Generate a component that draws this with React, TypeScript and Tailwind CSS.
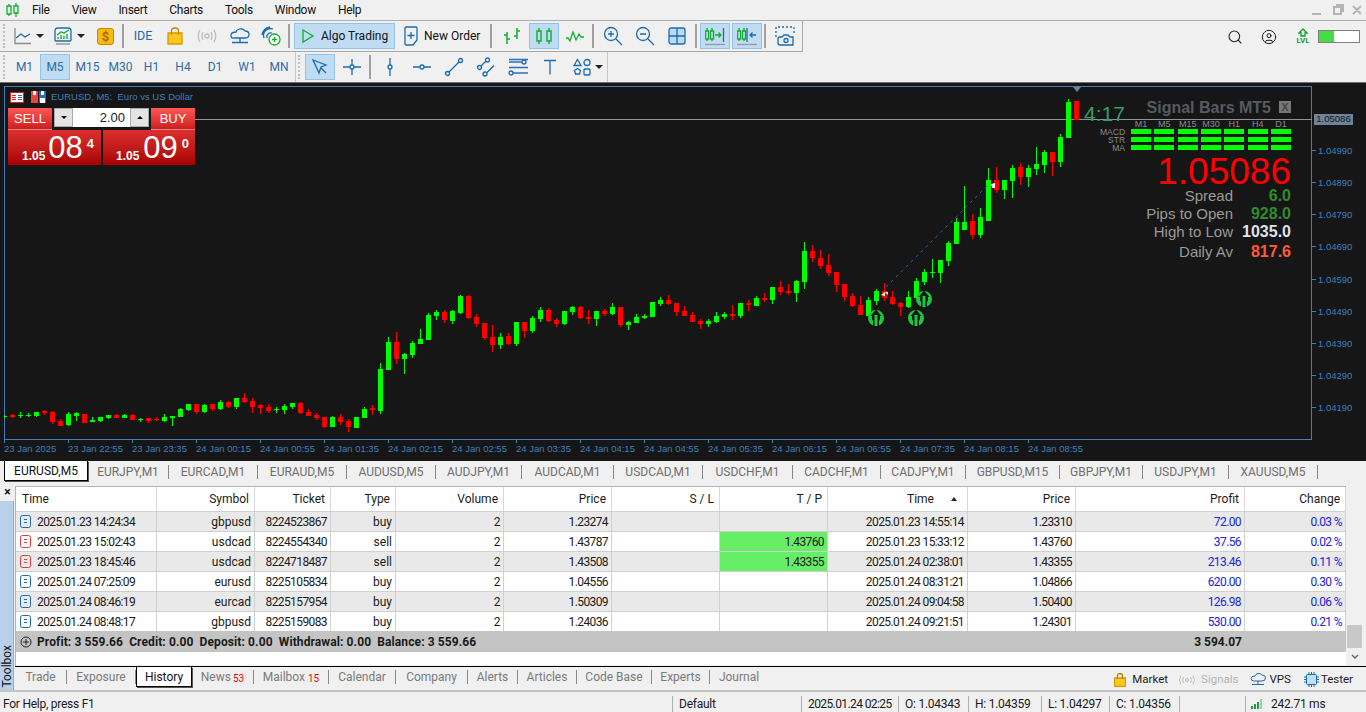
import type { ReactNode } from "react";
import { Search, CircleUser } from "lucide-react";

// wick top, body top, body bottom, wick bottom, up? (page pixels, bar k sits at x = 4 + 8k)
type Bar = [number, number, number, number, 0 | 1];
const bars: Bar[] = [
  [415,416,417,418,1],[414,415,417,418,0],[412,415,416,418,1],[413,415,416,417,1],[412,412,416,417,1],[410,411,413,415,0],[411,412,422,424,0],[419,421,426,426,0],
  [412,414,425,426,1],[412,413,416,421,1],[414,414,423,423,0],[417,420,422,422,1],[417,417,421,422,1],[415,415,418,419,1],[414,415,418,418,0],[414,415,418,418,1],
  [414,415,420,420,0],[418,419,420,422,1],[418,418,421,423,0],[417,419,420,421,0],[414,417,421,422,1],[416,416,418,426,1],[408,409,417,417,1],[404,404,410,411,1],
  [404,404,412,414,0],[404,405,412,413,1],[404,404,409,411,0],[400,402,409,410,1],[401,402,407,408,0],[398,398,407,409,1],[393,398,402,403,0],[398,401,407,413,0],
  [404,405,408,414,0],[404,407,411,413,0],[407,409,410,413,1],[404,406,410,414,1],[403,403,407,409,1],[402,403,413,414,0],[409,412,416,416,0],[413,415,418,420,0],
  [417,417,427,428,0],[416,417,427,427,1],[414,417,422,425,0],[419,421,427,432,0],[417,417,428,428,1],[407,409,418,418,1],[405,408,410,415,0],[363,369,411,414,1],
  [337,342,370,370,1],[332,342,359,364,0],[353,354,359,374,1],[341,343,355,358,1],[329,339,344,344,1],[313,315,340,340,1],[310,312,316,320,1],[310,312,320,323,0],
  [310,311,321,324,1],[295,296,313,314,1],[295,296,318,319,0],[314,317,324,327,0],[323,323,338,340,0],[325,337,345,352,0],[333,337,345,349,1],[333,336,344,345,0],
  [322,322,344,346,1],[322,322,331,338,0],[316,318,331,333,1],[307,310,319,322,1],[308,310,321,322,0],[318,320,324,327,0],[311,311,324,325,1],[306,307,312,315,1],
  [306,307,318,319,0],[310,317,319,324,0],[311,311,319,326,1],[309,311,314,316,0],[303,307,314,315,1],[307,307,325,327,0],[321,322,325,330,1],[314,317,323,323,1],
  [314,316,318,319,1],[302,302,317,317,1],[297,300,304,306,1],[295,300,304,305,0],[303,303,312,316,0],[306,311,316,316,0],[312,315,322,322,0],[319,321,324,329,0],
  [319,321,324,327,1],[312,316,322,323,1],[312,314,317,319,1],[305,314,316,320,0],[303,303,316,318,1],[300,303,305,311,0],[296,298,306,306,1],[293,298,300,302,0],
  [287,287,300,304,1],[281,287,292,295,0],[284,291,293,295,0],[280,281,293,302,1],[242,251,282,289,1],[245,251,258,262,0],[250,258,266,269,0],[254,265,273,276,0],
  [272,272,285,292,0],[284,284,297,301,0],[293,296,306,307,0],[296,305,315,315,0],[297,300,316,316,1],[289,291,301,305,1],[283,291,298,301,0],[291,297,304,305,0],
  [302,303,307,316,0],[291,297,307,308,1],[278,281,298,298,1],[269,272,282,285,1],[259,272,273,278,1],[260,260,273,283,1],[241,243,261,266,1],[218,222,244,244,1],
  [186,222,230,230,1],[214,221,235,239,0],[208,217,235,238,1],[168,180,221,221,1],[167,180,190,193,0],[180,180,190,199,1],[165,168,181,198,1],[163,167,177,185,0],
  [165,168,177,187,1],[147,164,169,175,1],[150,152,165,173,1],[152,152,162,176,0],[134,137,162,167,1],[99,102,138,138,1],[101,101,120,120,0],
];

const timeLabels = ["23 Jan 2025","23 Jan 22:55","23 Jan 23:35","24 Jan 00:15","24 Jan 00:55","24 Jan 01:35","24 Jan 02:15","24 Jan 02:55","24 Jan 03:35","24 Jan 04:15","24 Jan 04:55","24 Jan 05:35","24 Jan 06:15","24 Jan 06:55","24 Jan 07:35","24 Jan 08:15","24 Jan 08:55"];
const priceLabels = ["1.04990","1.04890","1.04790","1.04690","1.04590","1.04490","1.04390","1.04290","1.04190"];
const priceY = [150,182,214,246,279,311,343,375,407];

function ArrowMark({ x, y }: { x: number; y: number }) {
  return (
    <g transform={`translate(${x} ${y})`}>
      <circle r="6" fill="none" stroke="#1cc83c" strokeWidth="4" />
      <path d="M0 -8.500 L-5.500 -2 L-3 -2 L-3 8.500 L3 8.500 L3 -2 L5.500 -2 Z" fill="#161616" />
      <rect x="-1.500" y="-3" width="3" height="11" fill="#1cc83c" />
    </g>
  );
}

function ChartCanvas() {
  return (
    <svg className="absolute left-0 top-0 font-['Liberation_Sans',sans-serif]" width="1366" height="378" viewBox="0 83 1366 378">
      <g shapeRendering="crispEdges">
        {/* frame */}
        <rect x="4.5" y="86.5" width="1307" height="353" fill="none" stroke="#3f7fbd" />
        <rect x="195" y="119" width="1117" height="1" fill="#8b959e" />
        {bars.map((b, k) => {
          const x = 4 + 8 * k;
          const c = b[4] ? "#00ff00" : "#ff0000";
          return (
            <g key={k} fill={c}>
              <rect x={x} y={b[0]} width="1" height={b[3] - b[0]} />
              <rect x={k === 0 ? x : x - 2} y={b[1]} width={k === 0 ? 3 : 5} height={b[2] - b[1]} />
            </g>
          );
        })}
        {timeLabels.map((_, i) => (
          <rect key={i} x={4 + 64 * i} y="439" width="1" height="4" fill="#3f7fbd" />
        ))}
        {priceY.map((y) => (
          <rect key={y} x="1312" y={y} width="4" height="1" fill="#3f7fbd" />
        ))}
      </g>
      <path d="M886 287 L990 183" stroke="#1a66b0" strokeDasharray="3 4" fill="none" />
      <path d="M881 295 l4 -3 l0 4 z M888 295 l-3 -3 l3 0 z" fill="#fff" />
      <path d="M991 184 l4 -1 l0 5 l-3 0 z" fill="#fff" />
      <path d="M1073 87 h8 l-4 5 z" fill="#6f8299" />
      <ArrowMark x={876} y={318} />
      <ArrowMark x={916} y={318} />
      <ArrowMark x={924} y={299} />
      {timeLabels.map((t, i) => (
        <text key={t} x={4 + 64 * i} y="452" fontSize="9.5" fill="#3f7fbd">{t}</text>
      ))}
      {priceLabels.map((p, i) => (
        <text key={p} x="1318" y={priceY[i] + 4} fontSize="9.5" fill="#3f7fbd">{p}</text>
      ))}
    </svg>
  );
}

function TradePanel() {
  return (
    <div className="absolute left-[8px] top-[25px] w-[187px] font-['Liberation_Sans',sans-serif] text-white">
      <div className="flex h-[22px] items-start">
        <div className="flex h-[22px] w-[44px] items-center justify-center border-b border-[#e88] bg-linear-to-b from-[#ff5656] to-[#cc1c1c] text-[13px]">SELL</div>
        <div className="ml-[2px] flex h-[19px] w-[95px] items-stretch bg-white text-[13px] text-[#222]">
          <div className="flex w-[19px] items-center justify-center border border-[#aaa] bg-[#e4e4e4]">
            <span className="h-0 w-0 border-x-[3px] border-t-[3px] border-x-transparent border-t-black" />
          </div>
          <div className="flex flex-1 items-center justify-end pr-[5px]">2.00</div>
          <div className="flex w-[19px] items-center justify-center border border-[#aaa] bg-[#e4e4e4]">
            <span className="h-0 w-0 border-x-[3px] border-b-[3px] border-x-transparent border-b-black" />
          </div>
        </div>
        <div className="ml-[2px] flex h-[22px] w-[44px] items-center justify-center border-b border-[#e88] bg-linear-to-b from-[#ff5656] to-[#cc1c1c] text-[13px]">BUY</div>
      </div>
      <div className="flex h-[35px] gap-[2px]">
        <div className="flex w-[93px] items-start bg-linear-to-b from-[#dc2e2e] to-[#a80000] pl-[14px]">
          <span className="mt-[17px] text-[12px] font-bold">1.05</span>
          <span className="ml-[3px] mt-[2px] text-[31px] leading-[32px]">08</span>
          <span className="ml-[4px] mt-[4px] text-[13px] font-bold">4</span>
        </div>
        <div className="flex w-[92px] items-start bg-linear-to-b from-[#dc2e2e] to-[#a80000] pl-[13px]">
          <span className="mt-[17px] text-[12px] font-bold">1.05</span>
          <span className="ml-[4px] mt-[2px] text-[31px] leading-[32px]">09</span>
          <span className="ml-[4px] mt-[4px] text-[13px] font-bold">0</span>
        </div>
      </div>
    </div>
  );
}

const frames = ["M1", "M5", "M15", "M30", "H1", "H4", "D1"];

function SignalRow({ name }: { name: string }) {
  return (
    <div className="flex h-[5px] items-center">
      <span className="mr-[6px] w-[40px] text-right text-[8.500px] leading-[8px] text-[#8c8c8c]">{name}</span>
      <div className="flex gap-[3.33px]">
        {frames.map((f) => (
          <div key={f} className="h-[5px] w-[20px] bg-[#00ff00]" />
        ))}
      </div>
    </div>
  );
}

function StatRow({ label, value, color, className }: { label: string; value: string; color: string; className: string }) {
  return (
    <div className={`flex h-[18px] items-center justify-end ${className}`}>
      <span className="text-[15px] text-[#9a9a9a]">{label}</span>
      <span className={`w-[58px] text-right text-[16px] font-bold ${color}`}>{value}</span>
    </div>
  );
}

function SignalPanel() {
  return (
    <div className="absolute right-[75px] top-[15px] flex w-[240px] flex-col items-end font-['Liberation_Sans',sans-serif]">
      <div className="flex h-[18px] items-center">
        <span className="mt-[1px] text-[16px] font-bold text-[#555b60]">Signal Bars MT5</span>
        <span className="ml-[8px] flex h-[12px] w-[12px] items-center justify-center bg-[#777] text-[11px] font-bold leading-none text-[#444]">X</span>
      </div>
      <div className="mt-[4px] flex h-[9px] gap-[3.33px] text-[9px] leading-[9px] text-[#8c8c8c]">
        {frames.map((f) => (
          <span key={f} className="w-[20px] text-center">{f}</span>
        ))}
      </div>
      <div className="flex flex-col gap-[3px]">
        <SignalRow name="MACD" />
        <SignalRow name="STR" />
        <SignalRow name="MA" />
      </div>
      <div className="mt-[3px] h-[34px] text-[37px] leading-[38px] text-[#ff0000]">1.05086</div>
      <StatRow label="Spread" value="6.0" color="text-[#2e8b2e]" className="" />
      <StatRow label="Pips to Open" value="928.0" color="text-[#2e8b2e]" className="" />
      <StatRow label="High to Low" value="1035.0" color="text-[#dfe4ea]" className="" />
      <StatRow label="Daily Av" value="817.6" color="text-[#ff5a3c]" className="mt-[2px]" />
    </div>
  );
}

function ChartHeader() {
  return (
    <div className="absolute left-[10px] top-[8px] flex h-[12px] items-center font-['Liberation_Sans',sans-serif] text-[9.500px] text-[#3f7fbd]">
      <svg width="14" height="11" viewBox="0 0 14 11" shapeRendering="crispEdges">
        <rect width="14" height="11" fill="#e02020" />
        <rect x="1" y="1" width="12" height="9" fill="#fff" />
        <path d="M2 3h4M2 5h4M2 7h4" stroke="#e02020" />
        <path d="M8 3h4M8 5h4M8 7h4" stroke="#2a6cb8" />
      </svg>
      <svg className="ml-[7px]" width="15" height="12" viewBox="0 0 15 12" shapeRendering="crispEdges">
        <rect width="7" height="12" fill="#f04040" />
        <rect x="8" width="7" height="12" fill="#2a6cb8" />
        <rect x="2" y="0" width="3" height="4" fill="#fff" />
        <rect x="10" y="0" width="3" height="4" fill="#fff" />
        <rect x="9" y="7" width="5" height="5" fill="#fff" />
      </svg>
      <span className="ml-[5px] mt-[1px] whitespace-pre">EURUSD, M5:  Euro vs US Dollar</span>
    </div>
  );
}

function Chart() {
  return (
    <div className="relative h-[378px] bg-[#161616]">
      <ChartCanvas />
      <ChartHeader />
      <TradePanel />
      <SignalPanel />
      <span className="absolute left-[1084px] top-[20px] font-['Liberation_Sans',sans-serif] text-[21px] leading-[22px] text-[#3a9b6b]">4:17</span>
      <span className="absolute left-[1314px] top-[31px] flex h-[11px] w-[39px] items-center justify-center bg-[#6f8398] font-['Liberation_Sans',sans-serif] text-[9.5px] text-[#10161c]">1.05086</span>
    </div>
  );
}

/* ---------- toolbar icons ---------- */
const blue = "#1b6bb0";
const green = "#0fae2c";

function Sep({ className = "mx-[3px]" }: { className?: string }) {
  return <div className={`h-[24px] w-[2px] shrink-0 self-center bg-[#a0a0a0] ${className}`} />;
}

function Grip() {
  return <div className="mx-[2px] h-[24px] w-[2px] self-center border-l-2 border-dotted border-[#c0c0c0]" />;
}

function Caret() {
  return <span className="block h-0 w-0 border-x-[4px] border-t-[4px] border-x-transparent border-t-[#222]" />;
}

function Tool({ w = "w-[32px]", on, children, className = "" }: { w?: string; on?: boolean; children: ReactNode; className?: string }) {
  return (
    <div className={`flex h-[26px] shrink-0 items-center justify-center border ${w} ${on ? "border-[#90c4ee] bg-[#c0dcf3]" : "border-transparent"} ${className}`}>
      {children}
    </div>
  );
}

function Svg({ w = 20, h = 20, children }: { w?: number; h?: number; children: ReactNode }) {
  return (
    <svg className="shrink-0" width={w} height={h} viewBox={`0 0 ${w} ${h}`} fill="none" strokeWidth="1.3">
      {children}
    </svg>
  );
}

function CandleGlyph({ x, c = green }: { x: number; c?: string }) {
  return <path d={`M${x + 2} 2v3M${x + 2} 15v3M${x} 5h4v10h-4z`} stroke={c} strokeWidth="1.4" />;
}

function ToolRowOne() {
  return (
    <div className="flex h-[31px] w-[803px] items-center whitespace-nowrap border-b border-r border-[#a8a8a8] pl-[1px]">
      <Grip />
      <div className="ml-[6px] flex w-[19px] justify-center">
        <Svg w={18} h={18}>
          <path d="M1 1v15.5h16" stroke="#8a8a8a" />
          <path d="M2 11l5-4 4 3 5-3" stroke={blue} />
        </Svg>
      </div>
      <div className="ml-[4px] mr-[9px]"><Caret /></div>
      <Svg w={20} h={20}>
        <path d="M2 5q0-3 3-3h10q3 0 3 3v9q0 1-1 1H3q-1 0-1-1z" stroke={blue} />
        <path d="M3 18h14" stroke="#8a8a8a" />
        <path d="M5 13v-2M8 13v-4M11 13v-3M14 13v-5" stroke={green} />
        <path d="M4 9l4-3 3 1 5-3" stroke={green} />
      </Svg>
      <div className="ml-[4px] mr-[12px]"><Caret /></div>
      <div className="flex h-[17px] w-[17px] items-center justify-center rounded-[3px] border border-[#c98a00] bg-[#f8b912] text-[13px] font-bold leading-none text-[#a86a00]">$</div>
      <Sep className="ml-[8px] mr-0" />
      <Tool w="w-[38px]"><span className="text-[12.500px] text-[#1b6bb0]">IDE</span></Tool>
      <Tool w="w-[26px]">
        <Svg w={16} h={18}>
          <path d="M1 6h14v11H1z" fill="#f8c820" stroke="#d89a00" />
          <path d="M4.5 8V3.5q0-2.5 3.5-2.5t3.5 2.5V8" stroke="#c88800" />
        </Svg>
      </Tool>
      <Tool w="w-[38px]">
        <Svg w={20} h={14}>
          <circle cx="10" cy="7" r="2" stroke="#bdbdbd" />
          <path d="M6 3q-2 4 0 8M14 3q2 4 0 8M3 1q-3.500 6 0 12M17 1q3.500 6 0 12" stroke="#bdbdbd" />
        </Svg>
      </Tool>
      <Tool w="w-[28px]">
        <Svg w={20} h={17}>
          <path d="M5 10h10q4 0 4-3.500t-4-3.500q-2-3-5.500-2T6 4q-5 0-5 3.500T5 10z" stroke={blue} />
          <path d="M10 10v4M2 14.500h16" stroke={blue} />
        </Svg>
      </Tool>
      <Tool w="w-[34px]">
        <Svg w={20} h={20}>
          <path d="M3 12a7 7 0 0 1 9-9M1 9a10 10 0 0 1 8-8M6 12a4 4 0 0 1 5-5" stroke={blue} />
          <circle cx="13.500" cy="13.500" r="5.500" fill="#fff" stroke={green} />
          <path d="M13.500 11v5M11 13.500h5" stroke={green} />
        </Svg>
      </Tool>
      <Sep className="ml-0 mr-[4px]" />
      <Tool w="w-[101px]" on className="justify-start pl-[6px]">
        <Svg w={14} h={16}><path d="M2 2l10 6-10 6z" stroke={green} /></Svg>
        <span className="ml-[6px] text-[12px] text-[#111]">Algo Trading</span>
      </Tool>
      <div className="ml-[8px] flex items-center">
        <Svg w={16} h={20}>
          <path d="M3 1h10q1 0 1 1v12l-4 5H3q-1 0-1-1V2q0-1 1-1z" stroke={blue} />
          <path d="M8 6v7M4.500 9.500h7" stroke={blue} />
        </Svg>
        <span className="ml-[5px] text-[12px] text-[#111]">New Order</span>
      </div>
      <Sep className="ml-[10px] mr-[3px]" />
      <Tool w="w-[34px]">
        <Svg w={20} h={18}>
          <path d="M5 5v12M5 8H2M5 12h3M15 1v11M15 4h3M15 9h-3" stroke={green} strokeWidth="1.5" />
        </Svg>
      </Tool>
      <Tool w="w-[30px]" on>
        <Svg w={20} h={20}><CandleGlyph x={3} /><CandleGlyph x={13} /></Svg>
      </Tool>
      <Tool w="w-[32px]">
        <Svg w={20} h={14}>
          <path d="M1 9h2l2 3 3-9 3 8 3-6 2 3h3" stroke={green} />
        </Svg>
      </Tool>
      <Sep className="ml-[1px] mr-[3px]" />
      <Tool>
        <Svg w={20} h={20}>
          <circle cx="8" cy="8" r="6.500" stroke={blue} />
          <path d="M13 13l6 6M8 5v6M5 8h6" stroke={blue} />
        </Svg>
      </Tool>
      <Tool>
        <Svg w={20} h={20}>
          <circle cx="8" cy="8" r="6.500" stroke={blue} />
          <path d="M13 13l6 6M5 8h6" stroke={blue} />
        </Svg>
      </Tool>
      <Tool>
        <Svg w={18} h={18}>
          <rect x="1" y="1" width="16" height="16" rx="2" fill="#bcdcf6" stroke={blue} />
          <path d="M9 1v16M1 9h16" stroke={blue} />
        </Svg>
      </Tool>
      <Sep className="ml-[2px] mr-[3px]" />
      <Tool w="w-[30px]" on>
        <Svg w={20} h={20}>
          <path d="M2 2v3M2 13v2M0.500 5h3v8h-3zM7 2v3M7 13v2M5.500 5h3v8h-3z" stroke={green} />
          <path d="M10 9h6M13.500 6.500L16 9l-2.500 2.500" stroke={green} />
          <path d="M18.500 2v14" stroke={blue} />
          <path d="M0 18.500h20" stroke="#9a9a9a" />
        </Svg>
      </Tool>
      <Tool w="w-[30px]" className="ml-[2px]" on>
        <Svg w={20} h={20}>
          <path d="M2 2v3M2 13v2M0.500 5h3v8h-3zM7 2v3M7 13v2M5.500 5h3v8h-3z" stroke={green} />
          <path d="M10 2v14" stroke={blue} />
          <path d="M13 9h6M15.500 6.500L13 9l2.500 2.500" stroke={blue} />
          <path d="M0 18.500h20" stroke="#9a9a9a" />
        </Svg>
      </Tool>
      <Sep className="ml-[2px] mr-[5px]" />
      <Tool w="w-[28px]">
        <Svg w={20} h={20}>
          <path d="M1 11V1h18v7" stroke={blue} strokeDasharray="2 2" />
          <path d="M5 19q-2 0-2-2v-4q0-2 2-2h2l2-2h4l2 2h3v8z" fill="#f0f0f0" stroke={blue} />
          <circle cx="11" cy="14.500" r="2" stroke={blue} />
        </Svg>
      </Tool>
    </div>
  );
}

const periods = [
  { t: "M1", w: "w-[31px]" },
  { t: "M5", w: "w-[30px]", on: true },
  { t: "M15", w: "w-[35px]" },
  { t: "M30", w: "w-[31px]" },
  { t: "H1", w: "w-[31px]" },
  { t: "H4", w: "w-[32px]" },
  { t: "D1", w: "w-[32px]" },
  { t: "W1", w: "w-[32px]" },
  { t: "MN", w: "w-[32px]" },
];

function ToolRowTwo() {
  return (
    <div className="flex h-[30px] items-center pl-[1px]">
      <Grip />
      <div className="ml-[2px] flex text-[12px] text-[#2d6ca8]">
        {periods.map((p) => (
          <Tool key={p.t} w={p.w} on={p.on}>{p.t}</Tool>
        ))}
      </div>
      <div className="h-[30px] w-[1px] bg-[#c8c8c8]" />
      <Grip />
      <Tool w="w-[30px]" on className="ml-[3px]">
        <Svg w={16} h={16}><path d="M1 1l13 5-5 2-2 6z M9 9l5 5" stroke={blue} /></Svg>
      </Tool>
      <Tool w="w-[32px]" className="ml-[1px]">
        <Svg w={20} h={20}>
          <circle cx="10" cy="10" r="2" stroke={blue} />
          <path d="M10 2v6M10 12v6M1 10h7M12 10h7" stroke={blue} />
        </Svg>
      </Tool>
      <Sep className="ml-[1px] mr-[2px]" />
      <Tool w="w-[32px]" className="ml-[1px]">
        <Svg w={10} h={20}>
          <circle cx="5" cy="10" r="2" stroke={blue} />
          <path d="M5 1v7M5 12v7" stroke={blue} />
        </Svg>
      </Tool>
      <Tool>
        <Svg w={20} h={10}>
          <circle cx="10" cy="5" r="2" stroke={blue} />
          <path d="M1 5h7M12 5h7" stroke={blue} />
        </Svg>
      </Tool>
      <Tool>
        <Svg w={20} h={20}>
          <circle cx="3.500" cy="16.500" r="2" stroke={blue} />
          <circle cx="16.500" cy="3.500" r="2" stroke={blue} />
          <path d="M5 15L15 5" stroke={blue} />
        </Svg>
      </Tool>
      <Tool>
        <Svg w={20} h={20}>
          <circle cx="3.500" cy="10.500" r="2" stroke={blue} />
          <circle cx="11.500" cy="3" r="2" stroke={blue} />
          <circle cx="9" cy="17" r="2" stroke={blue} />
          <path d="M5 9l5-5M11 15.500l7-7" stroke={blue} />
        </Svg>
      </Tool>
      <Tool>
        <Svg w={20} h={18}>
          <circle cx="16" cy="4" r="2" stroke={blue} />
          <circle cx="3" cy="15" r="2" stroke={blue} />
          <path d="M1 4h13M1 9.500h19M5 15h15M1 1.500h19" stroke={blue} opacity="0.95" />
        </Svg>
      </Tool>
      <Tool>
        <Svg w={14} h={16}>
          <path d="M1 1.500h12M7 1.500v14" stroke={blue} />
        </Svg>
      </Tool>
      <Tool>
        <Svg w={18} h={18}>
          <path d="M4.500 1.500L8 7.500H1z" stroke={blue} />
          <circle cx="14" cy="4.500" r="3" stroke={blue} />
          <path d="M4.500 10.500l3 2-1 3.500h-4l-1-3.500z" stroke={blue} />
          <rect x="11" y="11" width="6" height="6" rx="1" stroke={blue} />
        </Svg>
      </Tool>
      <div className="ml-[-3px] mr-[4px]"><Caret /></div>
      <div className="h-[30px] w-[1px] bg-[#c8c8c8]" />
    </div>
  );
}

function MenuBar() {
  return (
    <div className="flex h-[21px] items-center border-b border-[#b0b0b0] text-[12px] text-[#111]">
      <div className="ml-[6px] mr-[13px] w-[13px]">
        <svg width="13" height="16" viewBox="0 0 13 16" fill="none" stroke="#12b030" strokeWidth="1.3">
          <path d="M3 2v2M3 12v2M1 4h4v8H1zM10 1v3M10 11v4M8 4h4v7H8z" />
        </svg>
      </div>
      <div className="flex gap-[22px] tracking-[-0.3px]">
        {["File", "View", "Insert", "Charts", "Tools", "Window", "Help"].map((m) => (
          <span key={m}>{m}</span>
        ))}
      </div>
      <div className="ml-auto mr-[5px] flex items-center gap-[10px] text-[#b4b4b4]">
        <svg width="50" height="14" viewBox="0 0 50 14" fill="none" stroke="#b4b4b4" strokeWidth="2">
          <path d="M1 11h9M23 4h7v7h-7zM26 4V2h6v6h-2M42 3l8 8M50 3l-8 8" />
        </svg>
      </div>
    </div>
  );
}

function TopRightTools() {
  return (
    <div className="absolute right-[6px] top-[28px] flex items-center">
      <Search size={16} strokeWidth={1.6} color="#222" />
      <CircleUser className="ml-[18px]" size={16} strokeWidth={1.5} color="#222" />
      <div className="ml-[16px] flex w-[20px] flex-col items-center text-[8px] font-bold leading-[8px] text-[#12a030]">
        <svg width="10" height="9" viewBox="0 0 10 9" fill="none" stroke="#12a030" strokeWidth="1.3">
          <path d="M5 1L1 5h2v3h4V5h2z" />
        </svg>
        LVL
      </div>
      <div className="ml-[5px] h-[13px] w-[42px] border border-[#808080] bg-white">
        <div className="h-full w-[15px] bg-[#44dd44]" />
      </div>
    </div>
  );
}

/* ---------- tabs ---------- */
const chartTabs = [
  { t: "EURJPY,M1", w: "w-[81px]" },
  { t: "EURCAD,M1", w: "w-[89px]" },
  { t: "EURAUD,M5", w: "w-[89px]" },
  { t: "AUDUSD,M5", w: "w-[89px]" },
  { t: "AUDJPY,M1", w: "w-[86px]" },
  { t: "AUDCAD,M1", w: "w-[92px]" },
  { t: "USDCAD,M1", w: "w-[89px]" },
  { t: "USDCHF,M1", w: "w-[90px]" },
  { t: "CADCHF,M1", w: "w-[88px]" },
  { t: "CADJPY,M1", w: "w-[85px]" },
  { t: "GBPUSD,M15", w: "w-[94px]" },
  { t: "GBPJPY,M1", w: "w-[83px]" },
  { t: "USDJPY,M1", w: "w-[86px]" },
  { t: "XAUUSD,M5", w: "w-[89px]" },
];

function ChartTabs() {
  return (
    <div className="flex h-[21px] pl-[4px] text-[12px] text-[#6e6e6e]">
      <div className="flex h-[20px] w-[84px] items-center justify-center border-x border-b border-black bg-white text-[#111] shadow-[1px_1px_0_#555]">EURUSD,M5</div>
      {chartTabs.map((c) => (
        <div key={c.t} className={`flex h-[14px] items-center justify-center self-center ${c.w} border-r border-[#888]`}>{c.t}</div>
      ))}
    </div>
  );
}

const bottomTabs = [
  { t: "Calendar", w: "w-[67px]" },
  { t: "Company", w: "w-[72px]" },
  { t: "Alerts", w: "w-[50px]" },
  { t: "Articles", w: "w-[59px]" },
  { t: "Code Base", w: "w-[75px]" },
  { t: "Experts", w: "w-[58px]" },
];

function BottomTabs() {
  return (
    <div className="flex h-[23px] items-stretch border-t border-black pb-[3px] text-[12px] text-[#7a7a7a]">
      <div className="flex h-[14px] w-[52px] items-center justify-center self-center border-r border-[#888]">Trade</div>
      <div className="flex h-[14px] w-[69px] items-center justify-center self-center border-r border-[#888]">Exposure</div>
      <div className="flex h-[20px] w-[56px] items-center justify-center border-x border-b border-black bg-white text-[#111] shadow-[1px_1px_0_#555]">History</div>
      <div className="flex h-[14px] w-[62px] items-center justify-center self-center border-r border-[#888]">
        News<sub className="ml-[2px] text-[10px] leading-none text-[#f00000]">53</sub>
      </div>
      <div className="flex h-[14px] w-[75px] items-center justify-center self-center border-r border-[#888]">
        Mailbox<sub className="ml-[3px] text-[10px] leading-none text-[#f00000]">15</sub>
      </div>
      {bottomTabs.map((c) => (
        <div key={c.t} className={`flex h-[14px] items-center justify-center self-center ${c.w} border-r border-[#888]`}>{c.t}</div>
      ))}
      <div className="flex w-[58px] items-center justify-center">Journal</div>
      <div className="ml-auto mt-[3px] flex h-[19px] items-center pr-[13px] text-[11.500px] text-[#222]">
        <Svg w={12} h={14}>
          <path d="M0.500 5h11v8.500H0.500z" fill="#f8c820" stroke="#d89a00" />
          <path d="M3.500 6V3q0-2.500 2.500-2.500T8.500 3v3" stroke="#b88000" />
        </Svg>
        <span className="ml-[6px]">Market</span>
        <svg className="ml-[11px]" width="16" height="10" viewBox="0 0 16 10" fill="none" stroke="#bdbdbd">
          <circle cx="8" cy="5" r="1.500" />
          <path d="M4.500 2q-1.500 3 0 6M11.500 2q1.500 3 0 6M2 0.500q-3 4.500 0 9M14 0.500q3 4.500 0 9" />
        </svg>
        <span className="ml-[6px] text-[#b4b4b4]">Signals</span>
        <svg className="ml-[12px]" width="16" height="14" viewBox="0 0 16 14" fill="none" stroke={blue}>
          <path d="M4 8h8q3.500 0 3.500-3T12 2q-1.500-2-4-1.500T5 3q-4 0-4 2.500T4 8zM8 8v3M2 11.500h12" />
        </svg>
        <span className="ml-[3px]">VPS</span>
        <svg className="ml-[13px]" width="15" height="15" viewBox="0 0 15 15" fill="#bfe0f8" stroke={blue}>
          <rect x="2.500" y="2.500" width="10" height="10" rx="1" />
          <path d="M5 0v2M7.500 0v2M10 0v2M5 13v2M7.500 13v2M10 13v2M0 5h2M0 7.500h2M0 10h2M13 5h2M13 7.500h2M13 10h2" />
        </svg>
        <span className="ml-[2px]">Tester</span>
      </div>
    </div>
  );
}

/* ---------- history table ---------- */
const cols = "grid grid-cols-[141px_98px_76px_65px_108px_108px_108px_108px_140px_108px_169px_101px]";
const heads = ["Symbol", "Ticket", "Type", "Volume", "Price", "S / L", "T / P"];

const rows = [
  ["2025.01.23 14:24:34", "gbpusd", "8224523867", "buy", "2", "1.23274", "", "", "2025.01.23 14:55:14", "1.23310", "72.00", "0.03 %"],
  ["2025.01.23 15:02:43", "usdcad", "8224554340", "sell", "2", "1.43787", "", "1.43760", "2025.01.23 15:33:12", "1.43760", "37.56", "0.02 %"],
  ["2025.01.23 18:45:46", "usdcad", "8224718487", "sell", "2", "1.43508", "", "1.43355", "2025.01.24 02:38:01", "1.43355", "213.46", "0.11 %"],
  ["2025.01.24 07:25:09", "eurusd", "8225105834", "buy", "2", "1.04556", "", "", "2025.01.24 08:31:21", "1.04866", "620.00", "0.30 %"],
  ["2025.01.24 08:46:19", "eurcad", "8225157954", "buy", "2", "1.50309", "", "", "2025.01.24 09:04:58", "1.50400", "126.98", "0.06 %"],
  ["2025.01.24 08:48:17", "gbpusd", "8225159083", "buy", "2", "1.24036", "", "", "2025.01.24 09:21:51", "1.24301", "530.00", "0.21 %"],
];

function RowIcon({ sell }: { sell: boolean }) {
  return (
    <svg className="mr-[6px] shrink-0" width="11" height="13" viewBox="0 0 11 13" fill="none" stroke={sell ? "#e03a3a" : "#1b6bb0"}>
      <rect x="0.500" y="0.500" width="10" height="12" rx="2" />
      <path d="M4 4.500h3M4 7.500h3" />
    </svg>
  );
}

function HistoryTable() {
  return (
    <div className="w-[1331px] border-l border-t border-[#b4b4b4] text-[12px] text-[#1a1a1a]">
      <div className={`${cols} h-[24px] bg-white`}>
        <div className="flex items-center border-r border-[#d8d8d8] pl-[6px]">Time</div>
        {heads.map((h) => (
          <div key={h} className="flex items-center justify-end border-r border-[#d8d8d8] pr-[5px]">{h}</div>
        ))}
        <div className="relative flex items-center border-r border-[#d8d8d8] pl-[79px]">
          Time
          <span className="absolute right-[10px] h-0 w-0 border-x-[3px] border-b-[4px] border-x-transparent border-b-[#222]" />
        </div>
        {["Price", "Profit", "Change"].map((h) => (
          <div key={h} className="flex items-center justify-end border-r border-[#d8d8d8] pr-[5px]">{h}</div>
        ))}
      </div>
      {rows.map((r, i) => (
        <div key={r[0]} className={`${cols} h-[20px] border-t border-[#d0d0d0] ${i % 2 === 0 ? "bg-[#e9e9e9]" : "bg-white"}`}>
          {r.map((v, j) => {
            if (j === 0) {
              return (
                <div key={j} className="flex items-center border-r border-[#d0d0d0] pl-[4px] tracking-[-0.6px]">
                  <RowIcon sell={r[3] === "sell"} />
                  {v}
                </div>
              );
            }
            const tp = j === 7 && v !== "";
            const money = j >= 10;
            const word = j === 1 || j === 3;
            return (
              <div key={j} className={`flex items-center justify-end border-r border-[#d0d0d0] pr-[3px] ${word ? "" : "tracking-[-0.6px]"} ${tp ? "bg-[#66ee66]" : ""} ${money ? "text-[#2222dd]" : ""}`}>
                {v}
              </div>
            );
          })}
        </div>
      ))}
      <div className={`${cols} h-[21px] items-center bg-[#c4c4c4] font-bold`}>
        <div className="col-span-9 flex items-center whitespace-pre pl-[4px] tracking-[0.1px]">
          <svg className="mr-[5px]" width="12" height="12" viewBox="0 0 12 12" fill="none" stroke="#222">
            <circle cx="6" cy="6" r="5" />
            <path d="M6 3v6M3 6h6" />
          </svg>
          {"Profit: 3 559.66  Credit: 0.00  Deposit: 0.00  Withdrawal: 0.00  Balance: 3 559.66"}
        </div>
        <div />
        <div className="pr-[3px] text-right">3 594.07</div>
        <div />
      </div>
      <div className="h-[13px] bg-white" />
    </div>
  );
}

function Scrollbar() {
  return (
    <div className="flex w-[20px] flex-col pl-[1px]">
      <div className="h-[139px]" />
      <div className="h-[23px] w-[15px] bg-[#c8c8c8]" />
      <div className="flex h-[18px] w-[15px] items-center justify-center">
        <svg width="8" height="6" viewBox="0 0 8 6" fill="none" stroke="#666" strokeWidth="1.5">
          <path d="M1 1l3 3 3-3" />
        </svg>
      </div>
    </div>
  );
}

function ToolboxRail() {
  return (
    <div className="flex w-[15px] flex-col items-center">
      <span className="flex h-[18px] items-center text-[12px] font-bold leading-none text-[#111]">×</span>
      <div className="flex w-[14px] flex-1 items-end justify-center self-start border-r border-[#9ab] bg-[#b9d0ea] pb-[2px]">
        <span className="rotate-180 text-[12px] leading-[14px] text-[#111] [writing-mode:vertical-rl]">Toolbox</span>
      </div>
    </div>
  );
}

const statusCells = [
  { t: "Default", w: "w-[129px]", x: "" },
  { t: "2025.01.24 02:25", w: "w-[97px]", x: "tracking-[-0.6px]" },
  { t: "O: 1.04343", w: "w-[70px]", x: "" },
  { t: "H: 1.04359", w: "w-[73px]", x: "" },
  { t: "L: 1.04297", w: "w-[68px]", x: "" },
  { t: "C: 1.04356", w: "w-[70px]", x: "" },
  { t: "", w: "w-[66px]", x: "" },
];

function StatusBar() {
  return (
    <div className="flex h-[22px] items-end whitespace-nowrap border-t-2 border-[#c4c4c4] text-[12px] tracking-[-0.25px] text-[#1a1a1a]">
      <span className="flex h-[16px] w-[672px] items-center pl-[3px]">For Help, press F1</span>
      {statusCells.map((c, i) => (
        <div key={i} className={`flex h-[16px] items-center border-l border-[#b0b0b0] pl-[6px] ${c.w} ${c.x}`}>{c.t}</div>
      ))}
      <div className="flex h-[16px] items-center border-l border-[#b0b0b0] pl-[5px]">
        <svg width="12" height="10" viewBox="0 0 12 10" fill="#22a040" shapeRendering="crispEdges">
          <rect x="0" y="7" width="2" height="3" />
          <rect x="3" y="5" width="2" height="5" />
          <rect x="6" y="3" width="2" height="7" />
          <rect x="9" y="0" width="2" height="10" fill="#9ad0a8" />
        </svg>
        <span className="ml-[8px]">242.71 ms</span>
      </div>
    </div>
  );
}

export default function App() {
  return (
    <div className="relative h-[712px] w-[1366px] overflow-hidden bg-[#f0f0f0] font-[Roboto,sans-serif]">
      <MenuBar />
      <ToolRowOne />
      <ToolRowTwo />
      <div className="h-[1px] bg-[#707070]" />
      <Chart />
      <ChartTabs />
      <div className="flex h-[208px] pt-[1px]">
        <ToolboxRail />
        <div className="flex flex-col">
          <div className="h-[3px]" />
          <div className="flex">
            <HistoryTable />
            <Scrollbar />
          </div>
          <BottomTabs />
        </div>
      </div>
      <StatusBar />
      <TopRightTools />
    </div>
  );
}
